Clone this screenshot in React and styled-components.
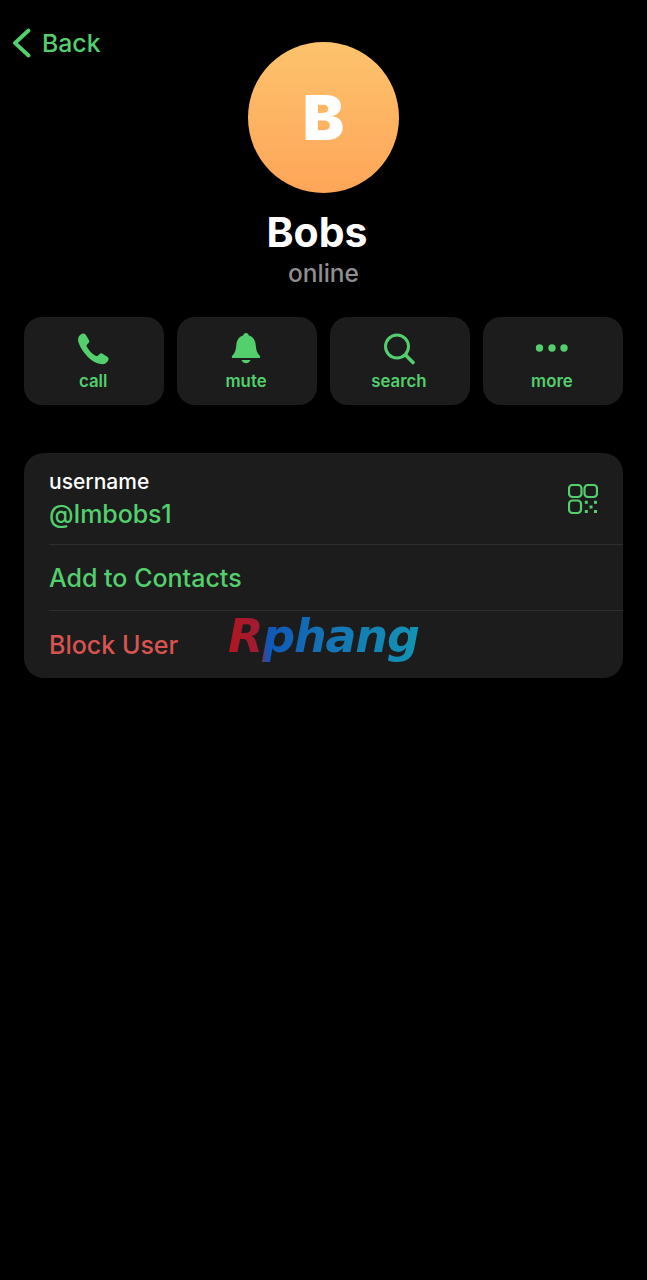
import React from "react";
import styled, { createGlobalStyle } from "styled-components";

const GREEN = "#53cf6d";

const GlobalStyle = createGlobalStyle`
  html, body {
    margin: 0;
    padding: 0;
    background: #000;
  }
  * {
    box-sizing: border-box;
  }
`;

const Page = styled.div`
  position: relative;
  width: 647px;
  height: 1280px;
  background: #000;
  font-family: Inter, "Liberation Sans", sans-serif;
  padding: 42px 24px 0;
`;

const BackLink = styled.div`
  position: absolute;
  top: 27px;
  left: 12px;
  display: flex;
  align-items: center;
  gap: 11px;
  height: 31px;
  color: ${GREEN};
  font-size: 24.8px;
  font-weight: 500;
`;

const Profile = styled.div`
  display: flex;
  flex-direction: column;
  align-items: center;
`;

const Avatar = styled.div`
  width: 151px;
  height: 151px;
  border-radius: 50%;
  background: linear-gradient(180deg, #fdc36c 0%, #fea558 100%);
  color: #fff;
  display: flex;
  align-items: center;
  justify-content: center;
  font-size: 62px;
  font-weight: 900;
`;

const Name = styled.div`
  margin-top: 14px;
  margin-right: 13px;
  color: #fff;
  font-size: 41px;
  line-height: 50px;
  font-weight: 700;
`;

const Status = styled.div`
  margin-top: 1px;
  color: #8e8e93;
  font-size: 24.5px;
  line-height: 30px;
  font-weight: 500;
`;

const Actions = styled.div`
  margin-top: 29px;
  display: grid;
  grid-template-columns: repeat(4, 1fr);
  gap: 12.6px;
`;

const Action = styled.div`
  height: 88px;
  border-radius: 18px;
  background: #1c1c1d;
  color: ${GREEN};
  display: flex;
  flex-direction: column;
  align-items: center;
  padding: 15px 2px 0 0;
`;

const ActionIcon = styled.svg`
  width: 34px;
  height: 34px;
  display: block;
`;

const ActionLabel = styled.span`
  margin-top: 5px;
  font-size: 16.8px;
  line-height: 20px;
  font-weight: 600;
`;

const Card = styled.div`
  position: relative;
  margin-top: 48px;
  height: 225px;
  border-radius: 20px;
  background: #1c1c1d;
  padding-left: 25px;
`;

const Row = styled.div`
  height: ${(p) => p.$height}px;
  display: flex;
  align-items: center;
  border-bottom: ${(p) => (p.$last ? "none" : "1px solid #2e2e31")};
  color: ${(p) => p.$color};
  font-size: 25px;
  font-weight: 500;
`;

const UserRow = styled(Row)`
  justify-content: space-between;
  padding-right: 25px;
`;

const UserText = styled.div`
  display: flex;
  flex-direction: column;
`;

const UserLabel = styled.span`
  color: #fff;
  font-size: 21px;
  line-height: 30px;
  font-weight: 500;
`;

const UserName = styled.span`
  margin-top: 1px;
  line-height: 32px;
  letter-spacing: -0.1px;
`;

const QrIcon = styled.svg`
  width: 30px;
  height: 30px;
  display: block;
`;

const Watermark = styled.div`
  position: absolute;
  left: 204px;
  top: 155px;
  font-family: "DejaVu Sans", sans-serif;
  font-size: 46px;
  line-height: 56px;
  font-weight: 700;
  font-style: italic;
  letter-spacing: -1.2px;
  background: linear-gradient(90deg, #b0161f 0%, #a01c34 16%, #1058b8 21%, #1473b4 50%, #1393b3 100%);
  -webkit-background-clip: text;
  background-clip: text;
  color: transparent;
`;

const PhoneGlyph = () => (
  <ActionIcon viewBox="0 0 34 34">
    <path
      fill="currentColor"
      d="M3 4.2C4.2 2.6 6.2 1.2 7.6 1.4c1 .1 1.7.7 2.3 1.7l3 5c.6 1 .5 2-.3 2.9l-1.7 1.8c-.5.6-.5 1.1-.2 1.8 1 2 2.3 3.8 3.9 5.4 1.6 1.6 3.4 2.9 5.4 3.9.7.3 1.3.3 1.8-.2l1.8-1.7c.9-.8 1.9-.9 2.9-.3l4.4 2.8c1 .6 1.7 1.4 1.7 2.5 0 1.4-1.3 3.2-2.9 4.3-1.3.9-3 1.1-4.9.8-4.6-.8-9.2-3.4-13.2-7.4C7.5 20.4 4 15.4 2.5 10.6 1.8 8.2 1.9 5.8 3 4.2z"
    />
  </ActionIcon>
);

const BellGlyph = () => (
  <ActionIcon viewBox="0 0 34 34">
    <path
      fill="currentColor"
      d="M17 1c1.5 0 2.6 1 2.8 2.5 4.4 1.2 6.4 4.6 6.9 9.5.5 5 1.2 8 3.9 10.6.9.9.9 2.4-.6 2.4H4c-1.5 0-1.5-1.5-.6-2.4C6.100 21 6.800 18 7.300 13c.5-4.900 2.500-8.300 6.900-9.500C14.400 2 15.500 1 17 1z"
    />
    <path fill="currentColor" d="M12.500 28h9c-.6 2-2.400 3.200-4.500 3.200S13.100 30 12.500 28z" />
  </ActionIcon>
);

const SearchGlyph = () => (
  <ActionIcon viewBox="0 0 34 34" fill="none" stroke="currentColor" strokeWidth="3" strokeLinecap="round">
    <circle cx="15" cy="14.500" r="11.500" />
    <path d="M24 23.500l7 7" strokeWidth="3.600" />
  </ActionIcon>
);

const MoreGlyph = () => (
  <ActionIcon viewBox="0 0 34 34" fill="currentColor">
    <circle cx="4.500" cy="16" r="3.700" />
    <circle cx="17" cy="16" r="3.700" />
    <circle cx="29" cy="16" r="3.700" />
  </ActionIcon>
);

const actions = [
  { label: "call", Glyph: PhoneGlyph },
  { label: "mute", Glyph: BellGlyph },
  { label: "search", Glyph: SearchGlyph },
  { label: "more", Glyph: MoreGlyph },
];

const App = () => {
  return (
    <Page>
      <GlobalStyle />
      <BackLink>
        <svg width="19" height="30" viewBox="0 0 19 30" fill="none">
          <path d="M16.500 2.500L3 15l13.500 12.500" stroke={GREEN} strokeWidth="3.800" strokeLinecap="round" strokeLinejoin="round" />
        </svg>
        Back
      </BackLink>
      <Profile>
        <Avatar>B</Avatar>
        <Name>Bobs</Name>
        <Status>online</Status>
      </Profile>
      <Actions>
        {actions.map(({ label, Glyph }) => (
          <Action key={label}>
            <Glyph />
            <ActionLabel>{label}</ActionLabel>
          </Action>
        ))}
      </Actions>
      <Card>
        <UserRow $height={92} $color={GREEN}>
          <UserText>
            <UserLabel>username</UserLabel>
            <UserName>@Imbobs1</UserName>
          </UserText>
          <QrIcon viewBox="0 0 30 30" fill="none" stroke={GREEN} strokeWidth="2.200">
            <rect x="1" y="1" width="12.500" height="12" rx="3.500" />
            <rect x="16.500" y="1" width="12.500" height="12" rx="3.500" />
            <rect x="1" y="16.500" width="12" height="12.500" rx="3.500" />
            <g fill={GREEN} stroke="none">
              <rect x="16.800" y="16.800" width="3" height="3" />
              <rect x="26" y="16.800" width="3" height="3" />
              <rect x="21.500" y="21.500" width="3" height="3" />
              <rect x="16.800" y="26" width="3" height="3" />
              <rect x="26" y="26" width="3" height="3" />
            </g>
          </QrIcon>
        </UserRow>
        <Row $height={66} $color={GREEN}>Add to Contacts</Row>
        <Row $height={67} $color="#d9534f" $last>Block User</Row>
        <Watermark>Rphang</Watermark>
      </Card>
    </Page>
  );
};

export default App;
